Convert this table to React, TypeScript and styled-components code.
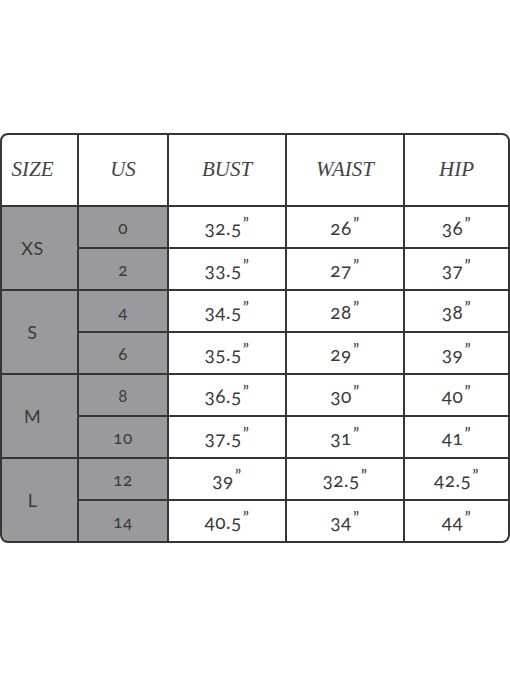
import React from 'react';
import styled, { createGlobalStyle } from 'styled-components';

const GlobalStyle = createGlobalStyle`
    html, body {
        margin: 0;
        padding: 0;
        background: #ffffff;
    }
`;

const Page = styled.main`
    width: 510px;
    height: 679px;
    padding-top: 133px;
    box-sizing: border-box;
`;

const Chart = styled.div`
    display: grid;
    grid-template-columns: 75px 88px 116px 116px 1fr;
    grid-template-rows: 70px repeat(8, 40px);
    gap: 2px;
    width: 510px;
    box-sizing: border-box;
    border: 2px solid #363636;
    border-radius: 8px;
    overflow: hidden;
    background: #363636;
`;

const Head = styled.div<{ $first?: boolean }>`
    display: flex;
    align-items: center;
    justify-content: center;
    background: #ffffff;
    font-family: "Liberation Serif", "DejaVu Serif", serif;
    font-style: italic;
    font-size: 21px;
    color: #444444;
    padding-bottom: 2px;
    padding-right: ${p => (p.$first ? '14px' : '0')};
`;

const Cell = styled.div<{ $shade?: boolean; $span?: number }>`
    display: flex;
    align-items: center;
    justify-content: center;
    background: ${p => (p.$shade ? '#9a9a9c' : '#ffffff')};
    grid-row: ${p => (p.$span ? `span ${p.$span}` : 'auto')};
    padding-right: ${p => (p.$span ? '14px' : '0')};
    font-family: Lato, "Noto Sans", sans-serif;
    font-weight: 400;
    font-variant-numeric: oldstyle-nums;
    font-size: ${p => (p.$span ? '18px' : p.$shade ? '17px' : '19px')};
    color: #3a3a3a;
    letter-spacing: 0.5px;
`;

const Inch = styled.span`
    font-size: 0.9em;
    margin-left: 1px;
    position: relative;
    top: -0.2em;
`;

const sizes = [
    { label: 'XS', rows: [['0', '32.5', '26', '36'], ['2', '33.5', '27', '37']] },
    { label: 'S', rows: [['4', '34.5', '28', '38'], ['6', '35.5', '29', '39']] },
    { label: 'M', rows: [['8', '36.5', '30', '40'], ['10', '37.5', '31', '41']] },
    { label: 'L', rows: [['12', '39', '32.5', '42.5'], ['14', '40.5', '34', '44']] },
];

export default function App() {
    return (
        <Page>
            <GlobalStyle />
            <Chart>
                <Head $first>SIZE</Head>
                <Head>US</Head>
                <Head>BUST</Head>
                <Head>WAIST</Head>
                <Head>HIP</Head>
                {sizes.map(size =>
                    size.rows.map((row, i) => (
                        <React.Fragment key={size.label + row[0]}>
                            {i === 0 && (
                                <Cell $shade $span={2}>
                                    {size.label}
                                </Cell>
                            )}
                            <Cell $shade>{row[0]}</Cell>
                            {row.slice(1).map((value, j) => (
                                <Cell key={j}>
                                    {value}
                                    <Inch>”</Inch>
                                </Cell>
                            ))}
                        </React.Fragment>
                    ))
                )}
            </Chart>
        </Page>
    );
}
